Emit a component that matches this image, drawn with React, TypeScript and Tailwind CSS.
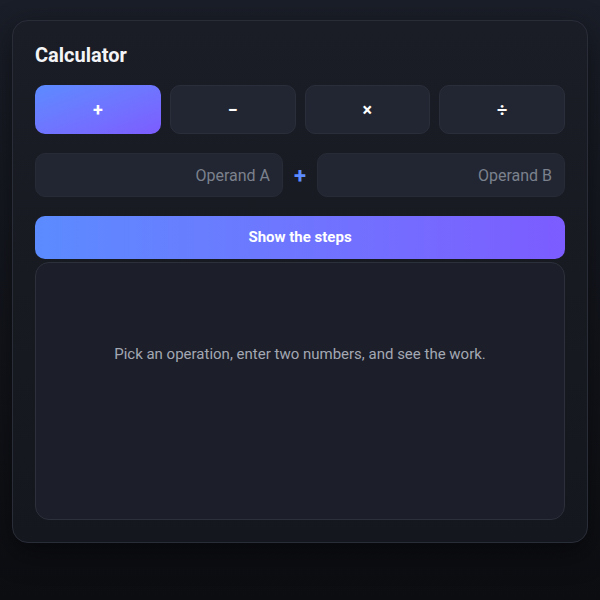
import { useState } from 'react';

const ops = ['+', '−', '×', '÷'];

export default function App() {
  const [op, setOp] = useState(0);

  return (
    <div
      className="min-h-[600px] w-full bg-gradient-to-b from-[#1a1e28] to-[#0c0d11] px-3 pt-5 pb-[58px]"
      style={{ fontFamily: 'Roboto, "Liberation Sans", sans-serif' }}
    >
      <div className="flex flex-col rounded-2xl border border-[#292d38] bg-gradient-to-b from-[#1b1d26] to-[#15171e] px-[22px] pt-[21px] pb-[22px] shadow-[0_10px_30px_rgba(0,0,0,0.45)]">
        <h1 className="text-[20px] font-bold leading-[26px] text-[#f3f4f6]">Calculator</h1>

        <div className="mt-[17px] grid grid-cols-4 gap-[9px]">
          {ops.map((o, i) => (
            <button
              key={o}
              onClick={() => setOp(i)}
              className={
                i === op
                  ? 'flex h-[49px] items-center justify-center rounded-[10px] bg-gradient-to-br from-[#5b8bff] to-[#7c5cff] text-[18px] font-bold text-white'
                  : 'flex h-[49px] items-center justify-center rounded-[10px] border border-[#2a2e3a] bg-[#222632] text-[18px] font-bold text-white'
              }
            >
              {o}
            </button>
          ))}
        </div>

        <div className="mt-[19px] flex items-center gap-[10px]">
          <input
            placeholder="Operand A"
            className="h-[44px] min-w-0 flex-1 rounded-[10px] border border-[#272b36] bg-[#222632] px-3 text-right text-[16px] text-white outline-none placeholder:text-[#7b818d]"
          />
          <span className="w-[14px] text-center text-[22px] font-bold text-[#5b8bff]">{ops[op]}</span>
          <input
            placeholder="Operand B"
            className="h-[44px] min-w-0 flex-1 rounded-[10px] border border-[#272b36] bg-[#222632] px-3 text-right text-[16px] text-white outline-none placeholder:text-[#7b818d]"
          />
        </div>

        <button className="mt-[19px] h-[43px] rounded-[10px] bg-gradient-to-r from-[#5b8bff] to-[#7c5cff] text-[15px] font-bold text-white">
          Show the steps
        </button>

        <div className="mt-[3px] flex h-[258px] justify-center rounded-[14px] border border-[#2c303b] bg-[#1c1e29] pt-[81px]">
          <p className="text-[15px] leading-[20px] text-[#a3a8b3]">
            Pick an operation, enter two numbers, and see the work.
          </p>
        </div>
      </div>
    </div>
  );
}
